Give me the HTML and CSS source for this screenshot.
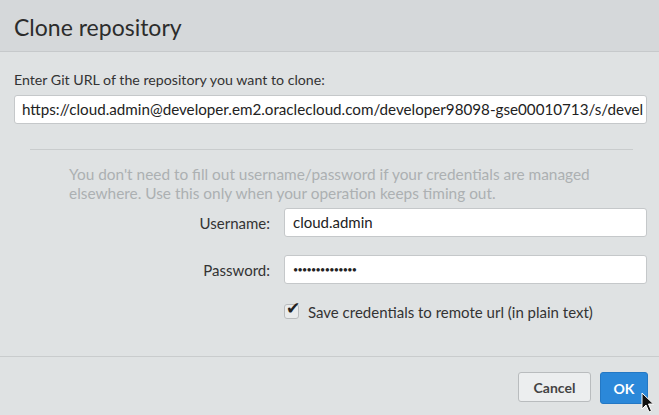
FILE: index.html
```html
<!DOCTYPE html>
<html>
<head>
<meta charset="utf-8">
<link rel="stylesheet" href="styles.css">
</head>
<body>
<div class="dialog">
  <div class="header"><h1 class="title">Clone repository</h1></div>
  <div class="content">
    <div class="url-label">Enter Git URL of the repository you want to clone:</div>
    <div class="field url-field">https://cloud.admin@developer.em2.oraclecloud.com/developer98098-gse00010713/s/devel</div>
    <div class="sep"></div>
    <div class="hint">You don't need to fill out username/password if your credentials are managed elsewhere. Use this only when your operation keeps timing out.</div>
    <div class="form">
      <div class="form-label">Username:</div>
      <div class="field">cloud.admin</div>
      <div class="form-label">Password:</div>
      <div class="field pw">••••••••••••••</div>
      <div></div>
      <div class="check-row">
        <span class="checkbox"><span class="tick">✔</span></span>
        <span class="check-text">Save credentials to remote url (in plain text)</span>
      </div>
    </div>
  </div>
  <div class="footer">
    <button class="btn cancel">Cancel</button>
    <button class="btn ok">OK</button>
  </div>
  <svg class="cursor" width="14" height="22" viewBox="0 0 14 22"><path d="M1 1 L1 17 L5 13 L8 20 L10.5 19 L7.5 12 L12.5 12 Z" fill="#111" stroke="#fff" stroke-width="1"/></svg>
</div>
</body>
</html>
```

FILE: styles.css
```css
html, body {
  margin: 0;
  padding: 0;
  background: #dfe2e3;
}
body {
  font-family: "Lato", "Noto Sans", sans-serif;
  color: #333;
  width: 659px;
  height: 415px;
  overflow: hidden;
}
.dialog {
  position: relative;
  height: 415px;
  display: flex;
  flex-direction: column;
}
.header {
  height: 52px;
  background: #d5d8da;
  border-bottom: 1px solid #c6c9cb;
  display: flex;
  align-items: center;
  padding-left: 14px;
  box-sizing: border-box;
  flex: none;
}
.title {
  margin: 0;
  font-weight: normal;
  font-size: 23px;
  color: #2c2c2c;
  position: relative;
  top: 1px;
}
.content {
  padding: 19px 12px 0 14px;
  height: 305px;
  box-sizing: border-box;
  border-bottom: 1px solid #c9cccd;
  flex: none;
}
.url-label {
  font-size: 14.2px;
  line-height: 18px;
  color: #333;
}
.field {
  background: #fff;
  border: 1px solid #c5c8ca;
  border-radius: 3px;
  height: 29px;
  box-sizing: border-box;
  padding: 0 8px;
  font-size: 15px;
  line-height: 27px;
  color: #222;
  white-space: nowrap;
  overflow: hidden;
}
.url-field {
  margin-top: 6px;
  width: 633px;
  padding-left: 7px;
  font-size: 15.2px;
}
.sep {
  margin: 25px 14px 0 16px;
  height: 1px;
  background: #c9cccd;
}
.hint {
  margin: 15px 0 0 55px;
  width: 530px;
  font-size: 15.4px;
  line-height: 19px;
  color: #acb0b2;
}
.form {
  display: grid;
  grid-template-columns: 256px 363px;
  column-gap: 14px;
  row-gap: 18px;
  margin-top: 5px;
  align-items: center;
}
.form-label {
  text-align: right;
  font-size: 15px;
  color: #333;
}
.pw {
  font-size: 9px;
  letter-spacing: -0.7px;
  line-height: 27px;
  color: #222;
}
.check-row {
  display: flex;
  align-items: center;
  height: 19px;
}
.checkbox {
  width: 15px;
  height: 15px;
  box-sizing: border-box;
  border: 1px solid #b9bcbe;
  border-radius: 3px;
  background: #e9ebec;
  position: relative;
  flex: none;
}
.tick {
  position: absolute;
  left: 1px;
  top: -7px;
  font-size: 17px;
  color: #222;
  font-family: "DejaVu Sans", sans-serif;
}
.check-text {
  margin-left: 9px;
  font-size: 15px;
  color: #333;
}
.footer {
  flex: 1;
  display: flex;
  justify-content: flex-end;
  align-items: flex-start;
  padding: 15px 11px 0 0;
  gap: 9px;
}
.btn {
  font-family: inherit;
  font-size: 14px;
  font-weight: bold;
  border-radius: 3px;
  box-sizing: border-box;
  cursor: default;
  margin: 0;
  padding: 0;
}
.cancel {
  width: 73px;
  height: 30px;
  background: #eceeef;
  border: 1px solid #b9bcbe;
  color: #444;
}
.ok {
  width: 48px;
  height: 32px;
  background: #2b88d9;
  border: 1px solid #2478c4;
  color: #fff;
}
.cursor {
  position: absolute;
  left: 641px;
  top: 392px;
}
```
